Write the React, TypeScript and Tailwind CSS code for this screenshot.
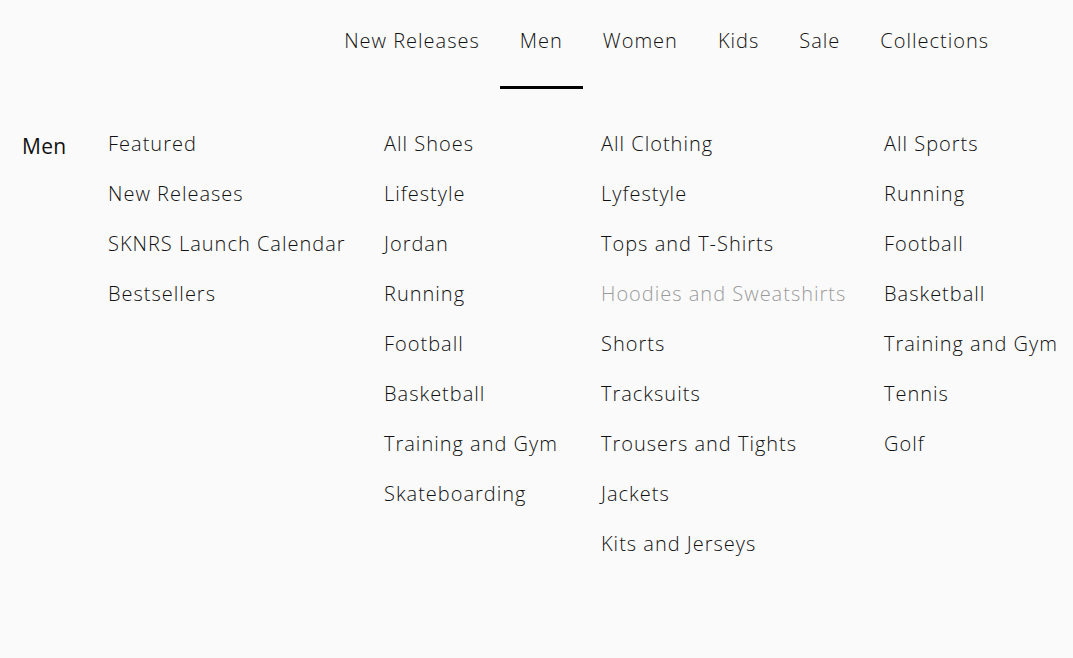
import React from 'react'

const navItems = ['New Releases', 'Men', 'Women', 'Kids', 'Sale', 'Collections']

const columns: { width: string; items: string[] }[] = [
  { width: 'w-[276px]', items: ['Featured', 'New Releases', 'SKNRS Launch Calendar', 'Bestsellers'] },
  {
    width: 'w-[217px]',
    items: ['All Shoes', 'Lifestyle', 'Jordan', 'Running', 'Football', 'Basketball', 'Training and Gym', 'Skateboarding'],
  },
  {
    width: 'w-[283px]',
    items: [
      'All Clothing',
      'Lyfestyle',
      'Tops and T-Shirts',
      'Hoodies and Sweatshirts',
      'Shorts',
      'Tracksuits',
      'Trousers and Tights',
      'Jackets',
      'Kits and Jerseys',
    ],
  },
  {
    width: 'w-[180px]',
    items: ['All Sports', 'Running', 'Football', 'Basketball', 'Training and Gym', 'Tennis', 'Golf'],
  },
]

export default function App() {
  return (
    <div className="w-full h-[658px] bg-[#fafafa] text-[#111] font-['Open_Sans',sans-serif] font-light overflow-hidden">
      {/* Top nav */}
      <nav className="flex justify-end pr-[64px] h-[89px]">
        {navItems.map((item) => (
          <a
            key={item}
            href="#"
            className={`flex items-start pt-[26px] px-5 text-[20px] tracking-[1px] leading-[30px] ${
              item === 'Men' ? 'border-b-[3px] border-black' : 'border-b-[3px] border-transparent'
            }`}
          >
            {item}
          </a>
        ))}
      </nav>

      {/* Mega menu */}
      <div className="flex pt-[30px] pl-[22px]">
        <div className="w-[86px] text-[21px] tracking-[0.3px] font-normal leading-[54px]">Men</div>
        {columns.map((col, i) => (
          <ul key={i} className={`${col.width} flex flex-col`}>
            {col.items.map((item) => (
              <li
                key={item}
                className={`text-[20px] tracking-[1px] leading-[50px] whitespace-nowrap ${
                  item === 'Hoodies and Sweatshirts' ? 'text-[#9a9a9a]' : ''
                }`}
              >
                {item}
              </li>
            ))}
          </ul>
        ))}
      </div>
    </div>
  )
}
